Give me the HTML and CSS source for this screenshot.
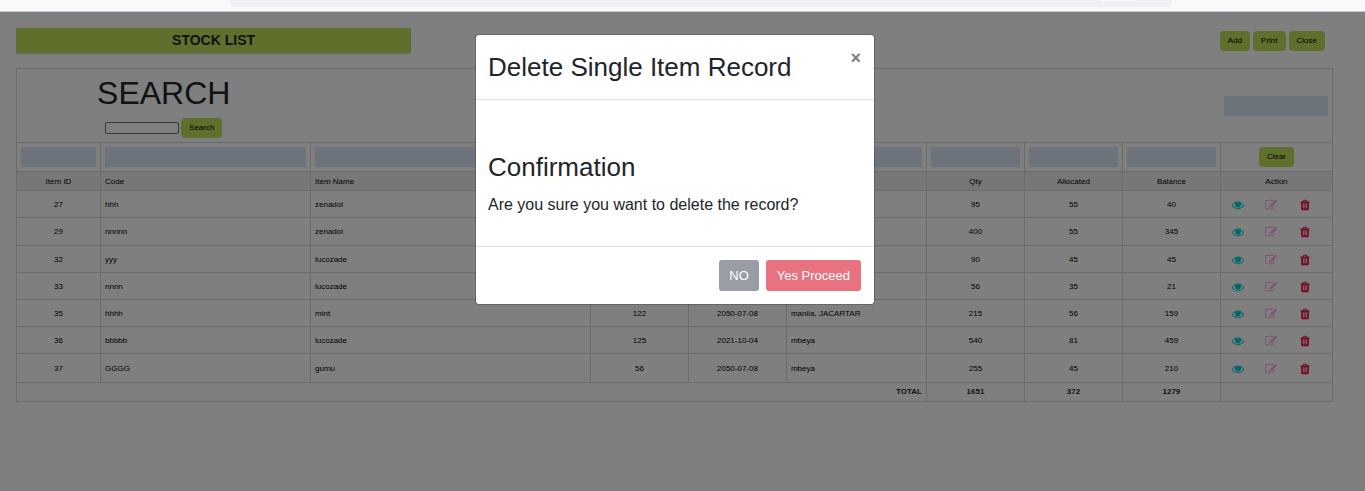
FILE: index.html
```html
<!DOCTYPE html>
<html lang="en">
<head>
<meta charset="utf-8">
<title>Stock List</title>
<link rel="stylesheet" href="styles.css">
</head>
<body>
<svg class="sprite" aria-hidden="true">
  <symbol id="eye" viewBox="0 0 1792 1792"><path d="M1664 960q-152-236-381-353 61 104 61 225 0 185-131.500 316.500t-316.500 131.500-316.500-131.500-131.500-316.500q0-121 61-225-229 117-381 353 133 205 333.500 326.500t434.500 121.500 434.500-121.500 333.500-326.500zm-720-384q0-20-14-34t-34-14q-125 0-214.500 89.500t-89.500 214.500q0 20 14 34t34 14 34-14 14-34q0-86 61-147t147-61q20 0 34-14t14-34zm848 384q0 34-20 69-140 230-376.500 368.500t-499.500 138.500-499.500-139-376.500-368q-20-35-20-69t20-69q140-229 376.500-368t499.500-139 499.500 139 376.500 368q20 35 20 69z"/><circle cx="896" cy="840" r="330"/></symbol>
  <symbol id="edit" viewBox="0 0 1792 1792"><path d="M888 1184l116-116-152-152-116 116v56h96v96h56zm440-720q-16-16-33 1l-350 350q-17 17-1 33t33-1l350-350q17-17 1-33zm80 594v190q0 119-84.500 203.500t-203.500 84.500h-832q-119 0-203.500-84.500t-84.500-203.500v-832q0-119 84.500-203.500t203.500-84.500h832q63 0 117 25 15 7 18 23 3 17-9 29l-49 49q-14 14-32 8-23-6-45-6h-832q-66 0-113 47t-47 113v832q0 66 47 113t113 47h832q66 0 113-47t47-113v-126q0-13 9-22l64-64q15-15 35-7t20 29zm-96-738l288 288-672 672h-288v-288zm444 132l-92 92-288-288 92-92q28-28 68-28t68 28l152 152q28 28 28 68t-28 68z"/></symbol>
  <symbol id="trash" viewBox="0 0 1792 1792"><path d="M704 1376v-704q0-14-9-23t-23-9h-64q-14 0-23 9t-9 23v704q0 14 9 23t23 9h64q14 0 23-9t9-23zm256 0v-704q0-14-9-23t-23-9h-64q-14 0-23 9t-9 23v704q0 14 9 23t23 9h64q14 0 23-9t9-23zm256 0v-704q0-14-9-23t-23-9h-64q-14 0-23 9t-9 23v704q0 14 9 23t23 9h64q14 0 23-9t9-23zm-544-992h448l-48-117q-7-9-17-11h-317q-10 2-17 11zm928 32v64q0 14-9 23t-23 9h-96v948q0 83-47 143.500t-113 60.500h-832q-66 0-113-58.500t-47-141.500v-952h-96q-14 0-23-9t-9-23v-64q0-14 9-23t23-9h309l70-167q15-37 54-63t79-26h320q40 0 79 26t54 63l70 167h309q14 0 23 9t9 23z"/></symbol>
</svg>
<div class="chrome"><div class="address"><div class="address-chip"></div></div></div>
<div class="page">
  <main class="content">
    <header class="topbar">
      <h1 class="page-title">STOCK LIST</h1>
      <div class="tools">
        <button class="btn" type="button">Add</button>
        <button class="btn" type="button">Print</button>
        <button class="btn" type="button">Close</button>
      </div>
    </header>
    <table class="stock">
      <colgroup>
        <col class="w6"><col class="w15"><col class="w20"><col class="w7"><col class="w7"><col class="w10"><col class="w7"><col class="w7"><col class="w7"><col class="w8">
      </colgroup>
      <thead>
        <tr class="search-row">
          <td colspan="2">
            <h2 class="search-title">SEARCH</h2>
            <form class="search-form"><input class="search-input" type="text" aria-label="Search"><button class="btn" type="button">Search</button></form>
          </td>
          <td colspan="7"></td>
          <td><input class="filter" type="text" aria-label="Filter"></td>
        </tr>
        <tr class="filter-row">
          <td><input class="filter" type="text" aria-label="Item ID"></td>
          <td><input class="filter" type="text" aria-label="Code"></td>
          <td><input class="filter" type="text" aria-label="Item Name"></td>
          <td><input class="filter" type="text" aria-label="Filter column 4"></td>
          <td><input class="filter" type="text" aria-label="Filter column 5"></td>
          <td><input class="filter" type="text" aria-label="Filter column 6"></td>
          <td><input class="filter" type="text" aria-label="Qty"></td>
          <td><input class="filter" type="text" aria-label="Allocated"></td>
          <td><input class="filter" type="text" aria-label="Balance"></td>
          <td><button class="btn" type="button">Clear</button></td>
        </tr>
        <tr class="head-row">
          <th>Item ID</th><th class="left">Code</th><th class="left">Item Name</th><th></th><th></th><th></th><th>Qty</th><th>Allocated</th><th>Balance</th><th>Action</th>
        </tr>
      </thead>
      <tbody id="rows"></tbody>
      <tfoot>
        <tr><td class="total" colspan="6">TOTAL</td><td>1651</td><td>372</td><td>1279</td><td></td></tr>
      </tfoot>
    </table>
  </main>
  <div class="backdrop">
    <div class="modal" role="dialog" aria-labelledby="modal-title">
      <div class="modal-header">
        <h2 class="modal-title" id="modal-title">Delete Single Item Record</h2>
        <button class="modal-close" type="button" aria-label="Close">×</button>
      </div>
      <div class="modal-body">
        <h3 class="modal-subtitle">Confirmation</h3>
        <p class="modal-text">Are you sure you want to delete the record?</p>
      </div>
      <div class="modal-footer">
        <button class="modal-btn no" type="button">NO</button>
        <button class="modal-btn yes" type="button">Yes Proceed</button>
      </div>
    </div>
  </div>
</div>
<script src="script.js"></script>
</body>
</html>
```
FILE: styles.css
```css
* { box-sizing: border-box; }
body {
  margin: 0;
  min-height: 100vh;
  display: flex;
  flex-direction: column;
  background: #fff;
  color: #212529;
  font-family: "Liberation Sans", Arial, sans-serif;
}
h1, h2, h3, p { margin: 0; font-weight: 400; }
button, input { font-family: inherit; }
.sprite { display: none; }

.chrome {
  height: 12px;
  padding: 0 193px 0 230px;
  background: #f9f9fb;
  border-bottom: 1px solid #ccc;
}
.address {
  height: 7px;
  padding-right: 37px;
  display: flex;
  justify-content: flex-end;
  background: #f0f0f4;
  border-radius: 0 0 4px 4px;
}
.address-chip { width: 33px; height: 1px; background: #fff; }

.page { position: relative; flex: 1; }
.content { padding: 16px 32px 16px 16px; }
.topbar {
  display: flex;
  justify-content: space-between;
  align-items: center;
  margin-bottom: 14px;
}
.page-title {
  width: 30%;
  height: 26px;
  border-bottom: 1px solid #dadada;
  background: #bce056;
  font-size: 14px;
  line-height: 25px;
  font-weight: 700;
  text-align: center;
}
.tools { display: flex; gap: 3px; padding-right: 8px; }
.btn {
  height: 20px;
  padding: 0 8px;
  border: 0;
  border-radius: 4px;
  background: #bce056;
  color: #000;
  font-size: 8px;
  line-height: 20px;
}

.stock {
  width: 100%;
  table-layout: fixed;
  border-collapse: collapse;
  border: 1px solid #d8d8d8;
  font-size: 8px;
  line-height: 10px;
  color: #000;
  text-align: center;
}
.w6 { width: 6%; }
.w7 { width: 7%; }
.w8 { width: 8%; }
.w10 { width: 10%; }
.w15 { width: 15%; }
.w20 { width: 20%; }
.stock td, .stock th {
  padding: 4px;
  border: 1px solid #d8d8d8;
  font-weight: 400;
}
.stock .search-row td { border-width: 0 0 1px; }
.search-title {
  padding-top: 1px;
  margin-bottom: 5px;
  color: #212529;
  font-size: 32px;
  line-height: 39px;
}
.search-form { display: flex; justify-content: center; align-items: center; gap: 2px; }
.search-input {
  width: 74px;
  height: 12px;
  padding: 0 2px;
  border: 1px solid #767676;
  border-radius: 2px;
  background: #fff;
  font-size: 8px;
}
.filter {
  display: block;
  width: 100%;
  height: 20px;
  padding: 0 4px;
  border: 0;
  background: #d8e6f4;
  font-size: 8px;
}
.filter-row .btn { display: block; margin: 0 auto; }
.head-row { background: #eee; }
.stock .head-row th { padding: 5px 4px 3px; }
.stock .left { text-align: left; }
.stock tbody tr { height: 27px; }
.stock tbody tr:nth-child(2) { height: 28px; }
.stock tbody tr:last-child { height: 29px; }
.stock tbody td { padding: 1px 4px 0; }
.stock tbody .actions-cell { padding: 0 10px 0 0; }
.stock tfoot td { font-weight: 700; color: #212529; }
.stock tfoot .total { text-align: right; }
.actions { display: flex; }
.icon-btn {
  flex: 1;
  display: flex;
  justify-content: center;
  padding: 1px 0 0;
  border: 0;
  background: none;
}
.icon-btn svg { width: 12px; height: 12px; fill: currentColor; }
.view { color: #00d0d0; }
.edit { color: #ff9ce0; }
.delete { color: #e81040; }

.backdrop {
  position: absolute;
  inset: 0;
  padding: 22px 15px 0 0;
  background: rgba(0, 0, 0, .5);
}
.modal {
  max-width: 400px;
  margin: 0 auto;
  border: 1px solid rgba(0, 0, 0, .2);
  border-radius: 4px;
  background: #fff;
  background-clip: padding-box;
}
.modal-header {
  display: flex;
  justify-content: space-between;
  align-items: flex-start;
  padding: 13px 13px 12px 12px;
  border-bottom: 1px solid #dee2e6;
}
.modal-title { font-size: 26px; line-height: 39px; }
.modal-close {
  padding: 0;
  border: 0;
  background: none;
  color: #7f7f7f;
  font-size: 18px;
  line-height: 20px;
  font-weight: 700;
}
.modal-body { padding: 52px 12px 29px; }
.modal-subtitle { margin-bottom: 10px; font-size: 26px; line-height: 31px; }
.modal-text { font-size: 16px; line-height: 24px; }
.modal-footer {
  display: flex;
  justify-content: flex-end;
  gap: 7px;
  padding: 13px;
  border-top: 1px solid #dee2e6;
}
.modal-btn {
  height: 31px;
  padding: 0 10px;
  border: 0;
  border-radius: 3px;
  color: #fff;
  font-size: 13px;
}
.no { background: #9a9da5; }
.yes { padding: 0 11px; background: #e8727f; }
```
FILE: script.js
```js
const items = [
  ["27", "hhh", "zenadol", "", "", "", "95", "55", "40"],
  ["29", "nnnnn", "zenadol", "", "", "", "400", "55", "345"],
  ["32", "yyy", "lucozade", "", "", "", "90", "45", "45"],
  ["33", "nnnn", "lucozade", "", "", "", "56", "35", "21"],
  ["35", "hhhh", "mint", "122", "2050-07-08", "manila, JACARTAR", "215", "56", "159"],
  ["36", "bbbbb", "lucozade", "125", "2021-10-04", "mbeya", "540", "81", "459"],
  ["37", "GGGG", "gumu", "56", "2050-07-08", "mbeya", "255", "45", "210"]
];
const leftColumns = [1, 2, 5];
const action = (name, label, icon) =>
  `<button class="icon-btn ${name}" type="button" aria-label="${label}"><svg><use href="#${icon}"/></svg></button>`;
const actions = `<td class="actions-cell"><div class="actions">${action("view", "View", "eye")}${action("edit", "Edit", "edit")}${action("delete", "Delete", "trash")}</div></td>`;
document.getElementById("rows").innerHTML = items.map(item =>
  "<tr>" + item.map((text, i) => `<td${leftColumns.includes(i) ? ' class="left"' : ""}>${text}</td>`).join("") + actions + "</tr>"
).join("");
```
